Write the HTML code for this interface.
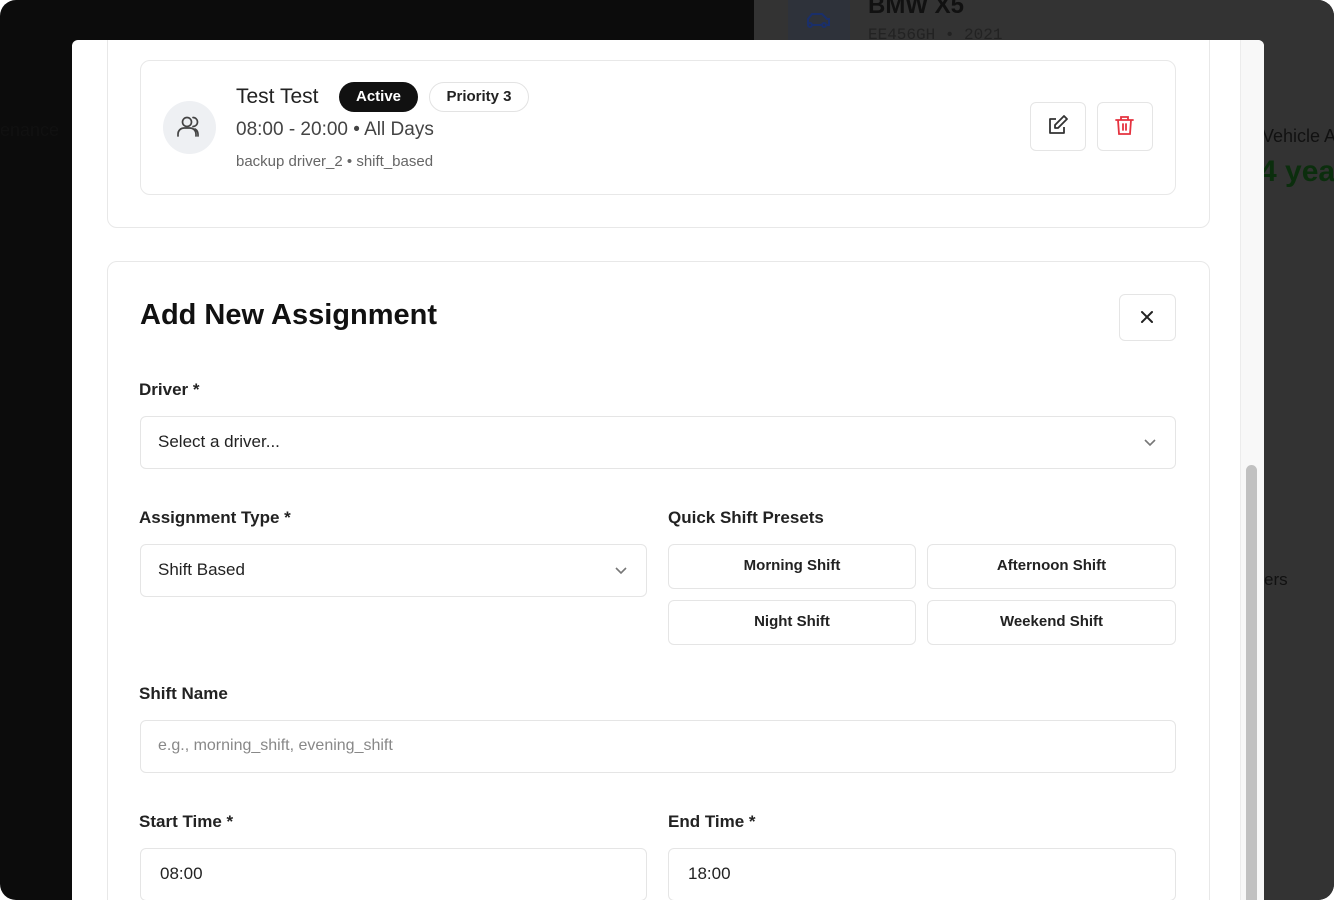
<!DOCTYPE html>
<html><head><style>
*{box-sizing:border-box;margin:0;padding:0}
body{width:1334px;height:900px;background:#fff;font-family:"Liberation Sans",sans-serif;overflow:hidden;position:relative}
.frame{position:absolute;left:0;top:0;width:1334px;height:900px;border-radius:16px;overflow:hidden;background:#0c0c0c}
.rightbg{position:absolute;left:754px;top:0;width:580px;height:900px;background:#333}
.modal{position:absolute;left:72px;top:40px;width:1192px;height:860px;background:#fff;border-radius:6px 6px 0 0;overflow:hidden}
.card{position:absolute;border:1.5px solid #e8e8e8;border-radius:10px;background:#fff}
.inp{position:absolute;border:1.5px solid #e5e5e5;border-radius:6px;height:53px;font-size:17px;color:#222;padding-left:17px;line-height:50px}
.lbl{position:absolute;font-size:17px;font-weight:bold;color:#222}
.btn{position:absolute;border:1.5px solid #e5e5e5;border-radius:6px;height:45px;font-size:15px;font-weight:bold;color:#222;text-align:center;line-height:42px}
.chev{position:absolute;right:18px;top:20px}
.bg{position:absolute;white-space:nowrap}
</style></head><body>
<div class="frame">
<div class="rightbg"></div>
<div style="position:absolute;left:788px;top:0;width:62px;height:40px;background:#2e323a">
<svg width="62" height="40" viewBox="0 0 62 40" fill="none" stroke="#1a2f6a" stroke-width="2"><path d="M20 24v-5l4-5h10l5 5h2v6h-2M24 25h10"/><circle cx="22" cy="25" r="2"/><circle cx="36" cy="25" r="2"/></svg>
</div>
<div class="bg" style="left:868px;top:-8px;font-size:24px;font-weight:bold;color:#111">BMW X5</div>
<div class="bg" style="left:868px;top:26px;font-family:'Liberation Mono',monospace;font-size:16px;color:#222">EE456GH • 2021</div>
<div class="bg" style="left:1262px;top:126px;font-size:18px;color:#111">Vehicle A</div>
<div class="bg" style="left:1260px;top:155px;font-size:30px;font-weight:bold;color:#0b2e0d">4 yea</div>
<div class="bg" style="left:1264px;top:570px;font-size:17px;color:#111">ers</div>
<div class="bg" style="left:0;top:120px;font-size:18px;color:#111">enance</div>
<div class="modal">
 <div class="card" style="left:35px;top:-20px;width:1103px;height:208px"></div>
 <div class="card" style="left:68px;top:20px;width:1036px;height:135px">
  <div style="position:absolute;left:22px;top:40px;width:53px;height:53px;border-radius:50%;background:#eef0f3">
   <svg width="53" height="53" viewBox="0 0 53 53" fill="none" stroke="#444" stroke-width="1.7" stroke-linecap="round"><circle cx="24" cy="21" r="4.5"/><path d="M15 35v-2a6 6 0 0 1 6-6h6a6 6 0 0 1 6 6v2M30 16.5a4.5 4.5 0 0 1 0 9M35 35v-2a6 6 0 0 0-3-5"/></svg>
  </div>
  <div style="position:absolute;left:95px;top:24px;font-size:21px;color:#222">Test Test</div>
  <div style="position:absolute;left:198px;top:21px;height:30px;width:79px;border-radius:15px;background:#111;color:#fff;font-size:15px;font-weight:bold;text-align:center;line-height:30px">Active</div>
  <div style="position:absolute;left:288px;top:21px;height:30px;width:100px;border-radius:15px;border:1.5px solid #e3e3e3;color:#222;font-size:15px;font-weight:bold;text-align:center;line-height:27px">Priority 3</div>
  <div style="position:absolute;left:95px;top:58px;font-size:19px;color:#444">08:00 - 20:00 • All Days</div>
  <div style="position:absolute;left:95px;top:92px;font-size:15px;color:#666">backup driver_2 • shift_based</div>
  <div style="position:absolute;left:889px;top:41px;width:56px;height:49px;border:1.5px solid #e5e5e5;border-radius:6px">
   <svg width="53" height="46" viewBox="0 0 53 46" fill="none" stroke="#333" stroke-width="1.8" stroke-linejoin="round"><path d="M25 16h-6v14h14v-6"/><path d="M33 13l3 3-9 9h-3v-3z"/></svg>
  </div>
  <div style="position:absolute;left:956px;top:41px;width:56px;height:49px;border:1.5px solid #e5e5e5;border-radius:6px">
   <svg width="53" height="46" viewBox="0 0 53 46" fill="none" stroke="#e5323f" stroke-width="1.8" stroke-linecap="round"><path d="M18 17h17M23 17v-3h7v3M20 17l1 14h11l1-14M25 21v6M28 21v6"/></svg>
  </div>
 </div>
 <div class="card" style="left:35px;top:221px;width:1103px;height:700px">
  <div style="position:absolute;left:32px;top:37px;font-size:29px;font-weight:bold;color:#111">Add New Assignment</div>
  <div style="position:absolute;left:1011px;top:32px;width:57px;height:47px;border:1.5px solid #e5e5e5;border-radius:6px">
   <svg width="54" height="44" viewBox="0 0 54 44" stroke="#222" stroke-width="2" stroke-linecap="round"><path d="M22 17l10 10M32 17l-10 10"/></svg>
  </div>
 </div>
 <div class="lbl" style="left:67px;top:340px">Driver *</div>
 <div class="inp" style="left:68px;top:376px;width:1036px">Select a driver...<svg class="chev" width="14" height="10" viewBox="0 0 14 10" fill="none" stroke="#777" stroke-width="1.6"><path d="M2 3l5 5 5-5"/></svg></div>
 <div class="lbl" style="left:67px;top:468px">Assignment Type *</div>
 <div class="inp" style="left:68px;top:504px;width:507px">Shift Based<svg class="chev" width="14" height="10" viewBox="0 0 14 10" fill="none" stroke="#777" stroke-width="1.6"><path d="M2 3l5 5 5-5"/></svg></div>
 <div class="lbl" style="left:596px;top:468px">Quick Shift Presets</div>
 <div class="btn" style="left:596px;top:504px;width:248px">Morning Shift</div>
 <div class="btn" style="left:855px;top:504px;width:249px">Afternoon Shift</div>
 <div class="btn" style="left:596px;top:560px;width:248px">Night Shift</div>
 <div class="btn" style="left:855px;top:560px;width:249px">Weekend Shift</div>
 <div class="lbl" style="left:67px;top:644px">Shift Name</div>
 <div class="inp" style="left:68px;top:680px;width:1036px;color:#888;font-size:16px">e.g., morning_shift, evening_shift</div>
 <div class="lbl" style="left:67px;top:772px">Start Time *</div>
 <div class="inp" style="left:68px;top:808px;width:507px;padding-left:19px">08:00</div>
 <div class="lbl" style="left:596px;top:772px">End Time *</div>
 <div class="inp" style="left:596px;top:808px;width:508px;padding-left:19px">18:00</div>
 <div style="position:absolute;left:1168px;top:0;width:24px;height:860px;background:#f8f8f8;border-left:1px solid #ececec"></div>
 <div style="position:absolute;left:1174px;top:425px;width:11px;height:460px;background:#c1c1c1;border-radius:6px"></div>
</div>
</div>
</body></html>
